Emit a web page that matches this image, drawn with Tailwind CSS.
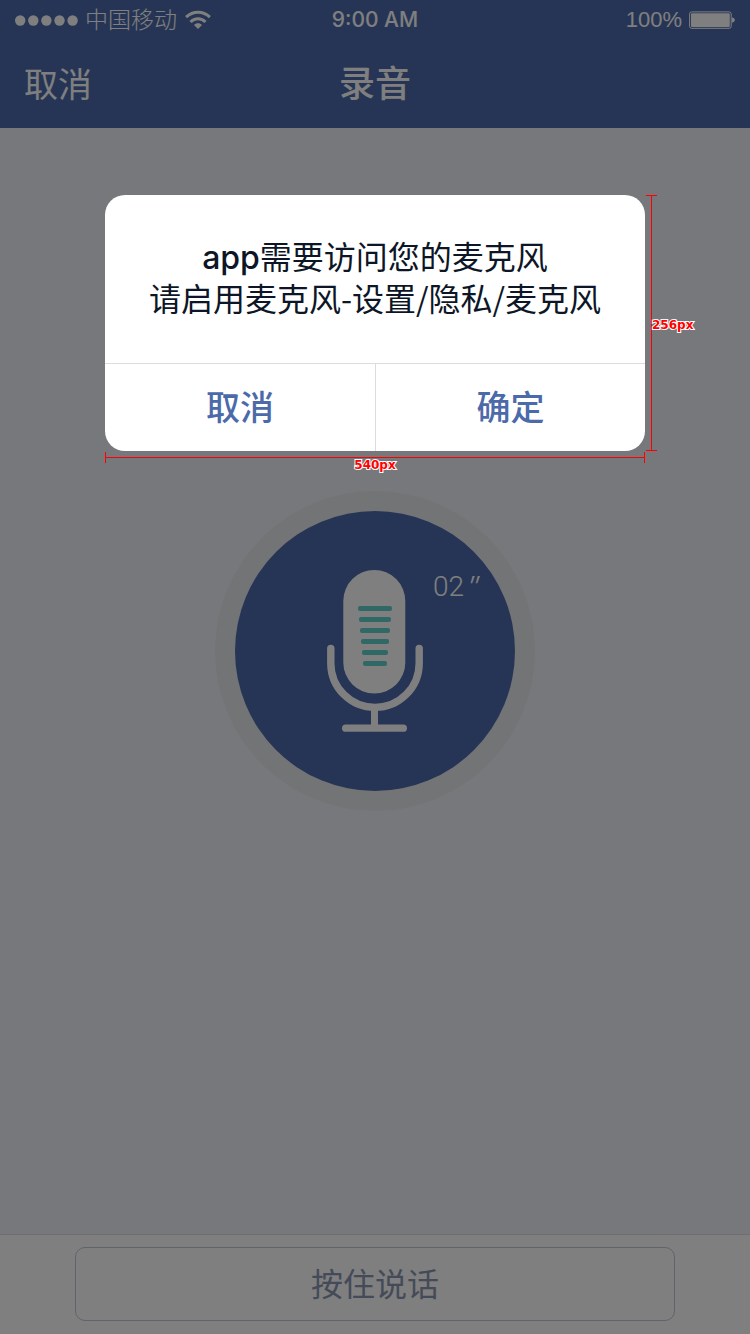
<!DOCTYPE html>
<html lang="zh-CN">
<head>
<meta charset="utf-8">
<meta name="viewport" content="width=device-width, initial-scale=1">
<title>录音</title>
<script src="https://cdn.jsdelivr.net/npm/@tailwindcss/browser@4"></script>
</head>
<body class="relative flex min-h-screen flex-col bg-[#eff1f8] font-['Liberation_Sans','Noto_Sans_CJK_SC',sans-serif] text-white">

<header class="bg-[#4c6aaa]">
  <div class="grid h-10 grid-cols-[1fr_auto_1fr] items-center px-[15px] text-[22px] leading-10">
    <div class="flex items-center gap-[7px]">
      <svg class="h-[11px] w-[63px]" viewBox="0 0 63 11" fill="currentColor" aria-hidden="true">
        <circle cx="5.2" cy="5.5" r="5.2"/><circle cx="18.3" cy="5.5" r="5.2"/><circle cx="31.4" cy="5.5" r="5.2"/><circle cx="44.5" cy="5.5" r="5.2"/><circle cx="57.6" cy="5.5" r="5.2"/>
      </svg>
      <span class="pb-1 font-['Noto_Sans_CJK_SC',sans-serif] text-[23px] leading-9 font-light">中国移动</span>
      <svg class="ml-px h-5 w-[26px]" viewBox="0 0 26 20" fill="none" stroke="currentColor" stroke-width="3" aria-hidden="true">
        <path d="M1.1 7.2C8 .6 18 .6 24.900 7.200"/>
        <path d="M5.500 12C9.800 7.700 16.200 7.700 20.500 12"/>
        <path d="M13 13.300c-1.600 0-2.900.6-4 1.600l4 4.100 4-4.100c-1.100-1-2.400-1.600-4-1.600Z" fill="currentColor" stroke="none"/>
      </svg>
    </div>
    <time class="font-['Inter',sans-serif] text-[21px] font-medium">9:00 AM</time>
    <div class="flex items-center justify-end gap-[7px]">
      <span>100%</span>
      <svg class="h-[18px] w-[46px]" viewBox="0 0 46 18" fill="currentColor" aria-hidden="true">
        <rect x=".6" y=".9" width="41.600" height="16.400" rx="2" fill="none" stroke="currentColor" stroke-width="1"/>
        <rect x="2" y="2.200" width="38.800" height="13.800" rx="1"/>
        <path d="M43 6.500c1.700.2 2.800 1.200 2.800 2.600s-1.100 2.400-2.800 2.600Z"/>
      </svg>
    </div>
  </div>
  <nav class="grid h-[88px] grid-cols-[1fr_auto_1fr] items-center px-6 pt-0.5">
    <button type="button" class="justify-self-start text-[34px] leading-[48px]">取消</button>
    <h1 class="text-4xl leading-[48px] font-medium">录音</h1>
  </nav>
</header>

<main class="flex flex-1 flex-col items-center pt-[363px]">
  <div class="relative rounded-full bg-[#e7e8eb] p-5">
    <div class="flex size-[280px] items-center justify-center rounded-full bg-[#4c6aaa]">
      <svg class="h-[162px] w-24" viewBox="0 0 96 162" fill="currentColor" aria-label="麦克风" role="img">
        <rect x="16.300" y="0" width="62" height="123.500" rx="31"/>
        <path d="M3.800 78.500v14.700a44.200 44.200 0 0 0 88.400 0V78.500" fill="none" stroke="currentColor" stroke-width="7.400" stroke-linecap="round"/>
        <rect x="44" y="138" width="7" height="18"/>
        <rect x="15" y="154.500" width="65" height="7.300" rx="3.650"/>
        <g fill="#60d0cc">
          <rect x="31" y="36" width="34" height="5" rx="2"/>
          <rect x="32" y="47" width="32" height="5" rx="2"/>
          <rect x="33" y="58" width="30" height="5" rx="2"/>
          <rect x="34" y="69" width="28" height="5" rx="2"/>
          <rect x="35" y="80" width="26" height="5" rx="2"/>
          <rect x="36" y="91" width="24" height="5" rx="2"/>
        </g>
      </svg>
    </div>
    <p class="absolute top-20 right-14 flex gap-1 font-['Roboto',sans-serif] text-[28px] leading-8 font-light">02<i class="font-['Inter',sans-serif]">″</i></p>
  </div>
</main>

<footer class="border-t border-[#dcdcdc] bg-white px-[10%] pt-3 pb-[13px]">
  <button type="button" class="h-[74px] w-full rounded-[10px] border border-[#c0c6d8] pt-0.5 text-[32px] leading-[48px] text-[#8a95b2]">按住说话</button>
</footer>

<div class="absolute inset-0 flex justify-center bg-black/50 pt-[195px]">
  <div class="relative w-[72%] self-start">
    <section role="alertdialog" aria-modal="true" aria-labelledby="message" class="overflow-hidden rounded-[20px] bg-white">
      <p id="message" class="pt-[39px] pb-[45px] text-center font-['Noto_Sans_CJK_SC',sans-serif] text-[32px] leading-[42px] text-[#0d1626]"><span class="font-['Inter',sans-serif] leading-8 font-medium">app</span>需要访问您的麦克风<br>请启用麦克风-设置/隐私/麦克风</p>
      <div class="grid h-[88px] grid-cols-2 border-t border-[#dcdcdc] text-[34px] leading-[48px] font-medium text-[#4c6aaa]">
        <button type="button" class="pt-px">取消</button>
        <button type="button" class="border-l border-[#dcdcdc] pt-px">确定</button>
      </div>
    </section>

    <!-- width dimension -->
    <div class="absolute inset-x-0 top-full mt-px flex h-[11px] items-center border-x border-[#f00] font-['DejaVu_Sans',sans-serif] text-xs leading-3 font-bold text-[#f00]">
      <div class="h-px w-full bg-[#f00]"></div>
      <span class="absolute top-[7px] left-1/2 -translate-x-1/2 [paint-order:stroke_fill] [-webkit-text-stroke:2px_white]">540px</span>
    </div>
    <!-- height dimension -->
    <div class="absolute inset-y-0 left-full ml-px flex w-[11px] justify-center border-y border-[#f00] font-['DejaVu_Sans',sans-serif] text-xs leading-3 font-bold text-[#f00]">
      <div class="h-full w-px bg-[#f00]"></div>
      <span class="absolute top-1/2 left-[6px] -mt-1 [paint-order:stroke_fill] [-webkit-text-stroke:2px_white]">256px</span>
    </div>
  </div>
</div>
</body>
</html>
